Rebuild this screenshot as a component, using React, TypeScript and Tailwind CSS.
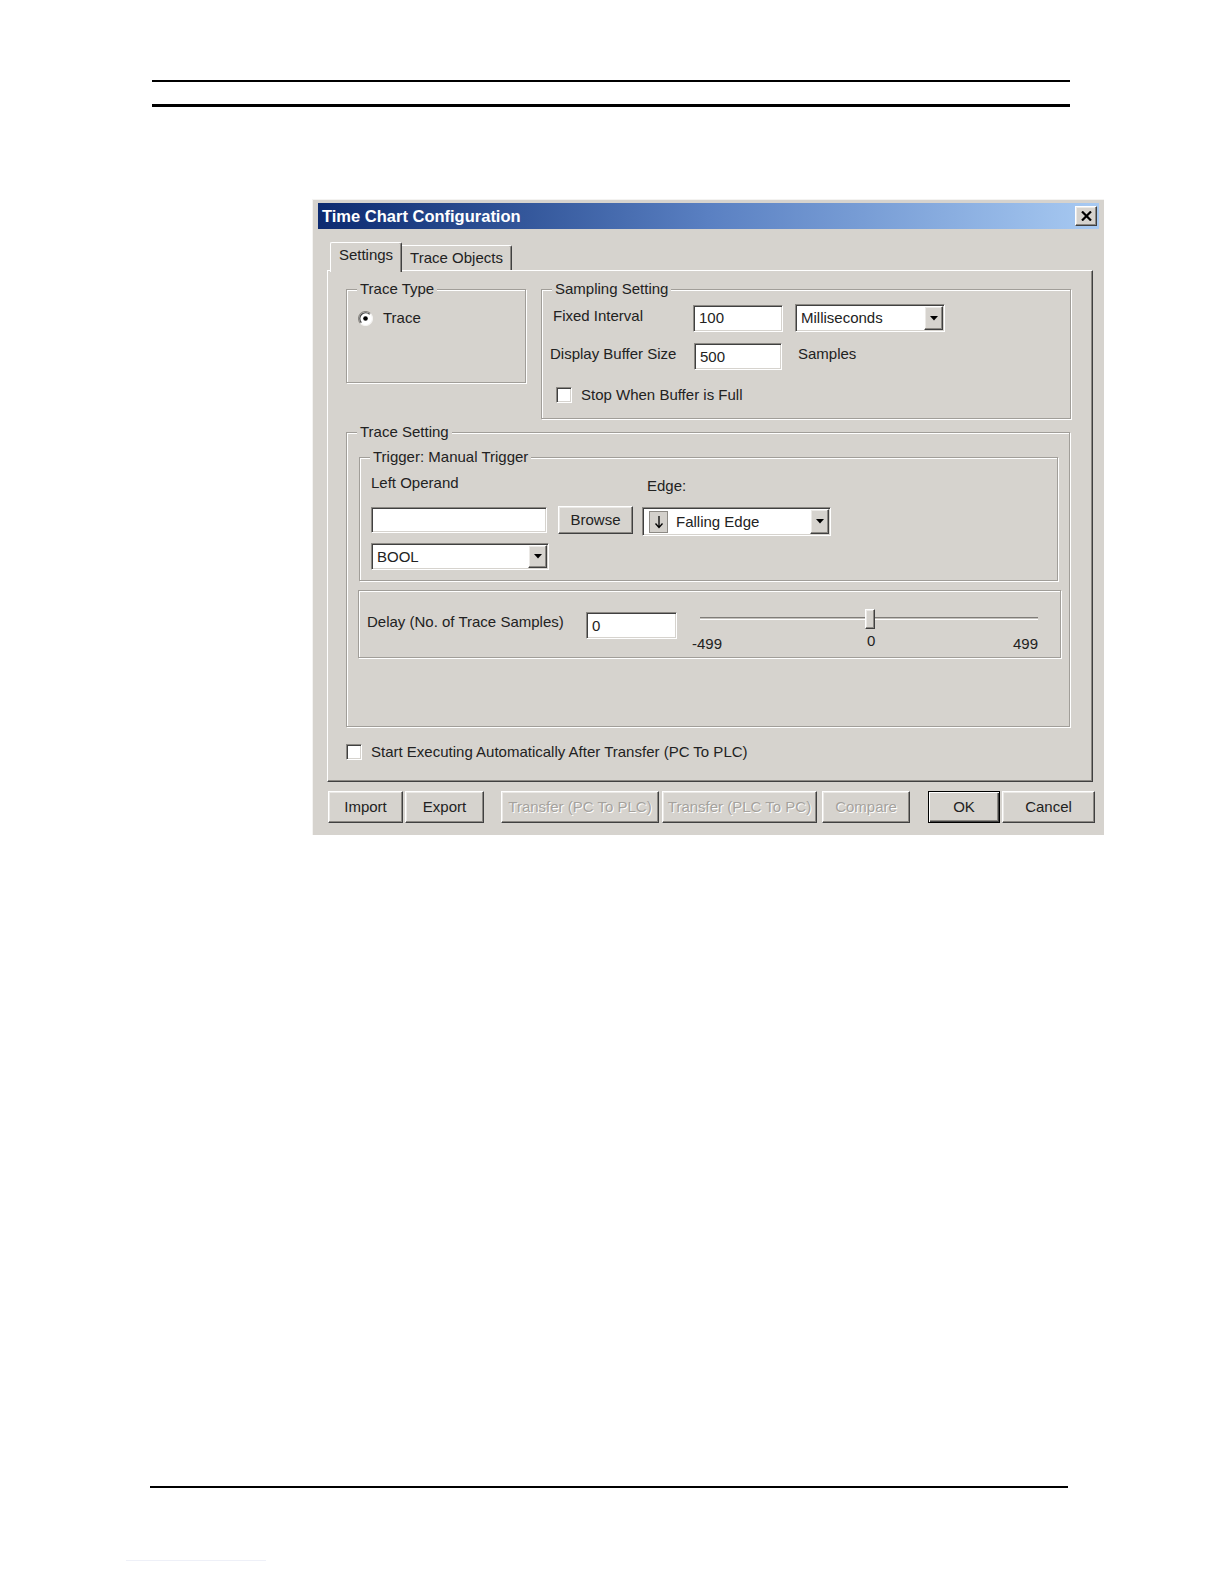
import React from "react";

const RAISED =
  "border border-t-white border-l-white border-r-[#404040] border-b-[#404040] shadow-[inset_-1px_-1px_0_#8c8984,inset_1px_1px_0_#ebe9e6]";
const SUNKEN =
  "border border-t-[#8c8984] border-l-[#8c8984] border-r-white border-b-white shadow-[inset_1px_1px_0_#404040,inset_-1px_-1px_0_#d6d3ce]";

function DownTriangle() {
  return (
    <svg width="8" height="5" viewBox="0 0 8 5">
      <polygon points="0,0 8,0 4,4.5" fill="#000" />
    </svg>
  );
}

function TextBox({ value = "", className = "" }: { value?: string; className?: string }) {
  return (
    <div className={`${SUNKEN} bg-white flex items-center pl-[5px] ${className}`}>
      {value}
    </div>
  );
}

function Combo({
  children,
  className = "",
}: {
  children: React.ReactNode;
  className?: string;
}) {
  return (
    <div className={`${SUNKEN} bg-white flex items-stretch p-[1px] ${className}`}>
      <div className="flex-1 flex items-center">{children}</div>
      <div className={`${RAISED} bg-[#d6d3ce] w-[19px] flex items-center justify-center`}>
        <DownTriangle />
      </div>
    </div>
  );
}

function Button({
  children,
  disabled,
  isDefault,
  className = "",
}: {
  children: React.ReactNode;
  disabled?: boolean;
  isDefault?: boolean;
  className?: string;
}) {
  const frame = isDefault
    ? "border border-black shadow-[inset_1px_1px_0_#fff,inset_-1px_-1px_0_#404040,inset_-2px_-2px_0_#8c8984]"
    : RAISED;
  return (
    <div
      className={`${frame} bg-[#d6d3ce] flex items-center justify-center ${
        disabled ? "text-[#a5a29d] [text-shadow:1px_1px_0_#fff]" : ""
      } ${className}`}
    >
      {children}
    </div>
  );
}

function GroupBox({
  label,
  className = "",
  children,
}: {
  label?: string;
  className?: string;
  children?: React.ReactNode;
}) {
  return (
    <div
      className={`relative flex flex-col border border-[#a19e99] shadow-[1px_1px_0_#fff,inset_1px_1px_0_#fff] ${className}`}
    >
      {label && (
        <span className="absolute left-[10px] -top-[10px] px-[3px] bg-[#d6d3ce] leading-[18px] whitespace-nowrap">
          {label}
        </span>
      )}
      {children}
    </div>
  );
}

function CheckBox() {
  return <div className={`${SUNKEN} bg-white w-[16px] h-[16px] shrink-0`} />;
}

function Radio() {
  return (
    <svg width="15" height="15" viewBox="0 0 15 15" className="shrink-0">
      <circle cx="7.5" cy="7.5" r="7" fill="#fff" />
      <path d="M2.55 12.45 A7 7 0 0 1 12.45 2.55" fill="none" stroke="#8c8984" strokeWidth="1.2" />
      <path d="M12.45 2.55 A7 7 0 0 1 2.55 12.45" fill="none" stroke="#f4f3f1" strokeWidth="1.2" />
      <path d="M3.4 11.6 A5.8 5.8 0 0 1 11.6 3.4" fill="none" stroke="#404040" strokeWidth="1.1" />
      <circle cx="7.5" cy="7.5" r="2.3" fill="#000" />
    </svg>
  );
}

function Slider({ className = "" }: { className?: string }) {
  return (
    <div className={`relative w-[348px] h-[50px] ${className}`}>
      <div className="absolute left-[8px] right-[2px] top-[11px] h-[3px] border-t border-b border-t-[#7f7c78] border-b-white bg-[#c4c1bc]" />
      <div className={`${RAISED} absolute left-[173px] top-[3px] w-[10px] h-[20px] bg-[#d6d3ce]`} />
      <span className="absolute left-0 top-[29px]">-499</span>
      <span className="absolute left-[175px] top-[26px]">0</span>
      <span className="absolute right-[2px] top-[29px]">499</span>
    </div>
  );
}

function TitleBar() {
  return (
    <div className="h-[26px] bg-linear-to-r from-[#0c2a70] via-[#5a80c2] to-[#a8caf2] flex items-center pl-[4px] pr-[2px]">
      <span className="flex-1 text-white font-bold text-[16.5px] leading-[20px]">
        Time Chart Configuration
      </span>
      <div className={`${RAISED} bg-[#d6d3ce] w-[22px] h-[20px] flex items-center justify-center`}>
        <svg width="11" height="10" viewBox="0 0 11 10">
          <path d="M1 0.5 L10 9.5 M10 0.5 L1 9.5" stroke="#000" strokeWidth="2.2" />
        </svg>
      </div>
    </div>
  );
}

function Tabs() {
  return (
    <div className="relative z-10 flex items-end h-[30px] -mb-[2px] ml-[12px] mt-[13px]">
      <div className="h-[30px] w-[72px] bg-[#d6d3ce] border-l border-t border-r border-l-white border-t-white border-r-[#404040] rounded-t-[2px] shadow-[inset_-1px_0_0_#8c8984] flex justify-center pt-[3px]">
        Settings
      </div>
      <div className="h-[25px] w-[110px] mb-[2px] border-t border-r border-t-white border-r-[#404040] rounded-tr-[2px] shadow-[inset_-1px_0_0_#8c8984] flex justify-center pt-[3px]">
        Trace Objects
      </div>
    </div>
  );
}

function FallingEdgeIcon() {
  return (
    <div className="w-[19px] h-[22px] ml-[5px] bg-[#d3d0cb] border border-[#8c8984] flex items-center justify-center">
      <svg width="10" height="14" viewBox="0 0 10 14">
        <path d="M5 1 V12.5 M1.5 8.5 L5 12.5 L8.5 8.5" fill="none" stroke="#000" strokeWidth="1.3" />
      </svg>
    </div>
  );
}

function SettingsPanel() {
  return (
    <div className="relative w-[766px] h-[512px] ml-[9px] border border-t-white border-l-white border-r-[#404040] border-b-[#404040] shadow-[inset_-1px_-1px_0_#8c8984] flex flex-col">
      <div className="flex items-start mt-[18px] ml-[18px] gap-[15px]">
        <GroupBox label="Trace Type" className="w-[180px] h-[94px]">
          <div className="flex items-center mt-[19px] ml-[11px] gap-[10px]">
            <Radio />
            <span>Trace</span>
          </div>
        </GroupBox>

        <GroupBox label="Sampling Setting" className="w-[530px] h-[130px]">
          <div className="flex items-center mt-[14px] ml-[11px] h-[28px]">
            <span className="w-[140px] -mt-[5px]">Fixed Interval</span>
            <TextBox value="100" className="w-[90px] h-[27px]" />
            <Combo className="ml-[12px] w-[150px] h-[28px]">
              <span className="pl-[4px]">Milliseconds</span>
            </Combo>
          </div>
          <div className="flex items-center mt-[11px] ml-[8px] h-[27px]">
            <span className="w-[144px] -mt-[6px]">Display Buffer Size</span>
            <TextBox value="500" className="w-[88px] h-[27px]" />
            <span className="ml-[16px] -mt-[6px]">Samples</span>
          </div>
          <div className="flex items-center mt-[16px] ml-[14px]">
            <CheckBox />
            <span className="ml-[9px]">Stop When Buffer is Full</span>
          </div>
        </GroupBox>
      </div>

      <GroupBox label="Trace Setting" className="mt-[13px] ml-[18px] w-[724px] h-[295px]">
        <GroupBox label="Trigger: Manual Trigger" className="mt-[24px] ml-[12px] w-[699px] h-[124px]">
          <div className="flex items-start mt-[16px] ml-[11px]">
            <span className="w-[276px]">Left Operand</span>
            <span className="mt-[3px]">Edge:</span>
          </div>
          <div className="flex items-start mt-[11px] ml-[11px]">
            <TextBox className="mt-[1px] w-[176px] h-[26px]" />
            <Button className="ml-[11px] w-[75px] h-[28px]">Browse</Button>
            <Combo className="ml-[9px] mt-[1px] w-[189px] h-[29px]">
              <FallingEdgeIcon />
              <span className="ml-[8px]">Falling Edge</span>
            </Combo>
          </div>
          <Combo className="mt-[7px] ml-[11px] w-[178px] h-[27px]">
            <span className="pl-[4px]">BOOL</span>
          </Combo>
        </GroupBox>

        <GroupBox className="mt-[9px] ml-[11px] w-[703px] h-[68px]">
          <div className="flex items-start mt-[21px] ml-[8px]">
            <span className="w-[219px] h-[27px] flex items-center -mt-[4px]">Delay (No. of Trace Samples)</span>
            <TextBox value="0" className="w-[91px] h-[27px]" />
            <Slider className="ml-[15px] -mt-[6px]" />
          </div>
        </GroupBox>
      </GroupBox>

      <div className="flex items-center mt-[16px] ml-[18px]">
        <CheckBox />
        <span className="ml-[9px]">Start Executing Automatically After Transfer (PC To PLC)</span>
      </div>
    </div>
  );
}

function ButtonRow() {
  return (
    <div className="flex items-start mt-[9px] ml-[10px]">
      <Button className="w-[75px] h-[32px]">Import</Button>
      <Button className="ml-[2px] w-[79px] h-[32px]">Export</Button>
      <Button disabled className="ml-[17px] w-[158px] h-[32px]">Transfer (PC To PLC)</Button>
      <Button disabled className="ml-[3px] w-[155px] h-[32px]">Transfer (PLC To PC)</Button>
      <Button disabled className="ml-[5px] w-[88px] h-[32px]">Compare</Button>
      <Button isDefault className="ml-[18px] w-[72px] h-[32px]">OK</Button>
      <Button className="ml-[2px] w-[93px] h-[32px]">Cancel</Button>
    </div>
  );
}

export default function App() {
  return (
    <div className="w-[1224px] h-[1584px] bg-white flex flex-col font-['Liberation_Sans',Arial,sans-serif] text-[15px] leading-[18px] text-[#222]">
      <div className="mt-[80px] ml-[152px] w-[918px] h-[2px] bg-black" />
      <div className="mt-[22px] ml-[152px] w-[918px] h-[3px] bg-black" />

      <div className="mt-[92px] ml-[312px] w-[792px] h-[636px] bg-[#d6d3ce] border-l border-t border-[#f4f3f1] pt-[3px] px-[5px] flex flex-col">
        <TitleBar />
        <Tabs />
        <SettingsPanel />
        <ButtonRow />
      </div>

      <div className="mt-[651px] ml-[150px] w-[918px] h-[2px] bg-black" />
      <div className="mt-[72px] ml-[126px] w-[140px] h-px bg-[#eef0f8]" />
    </div>
  );
}
